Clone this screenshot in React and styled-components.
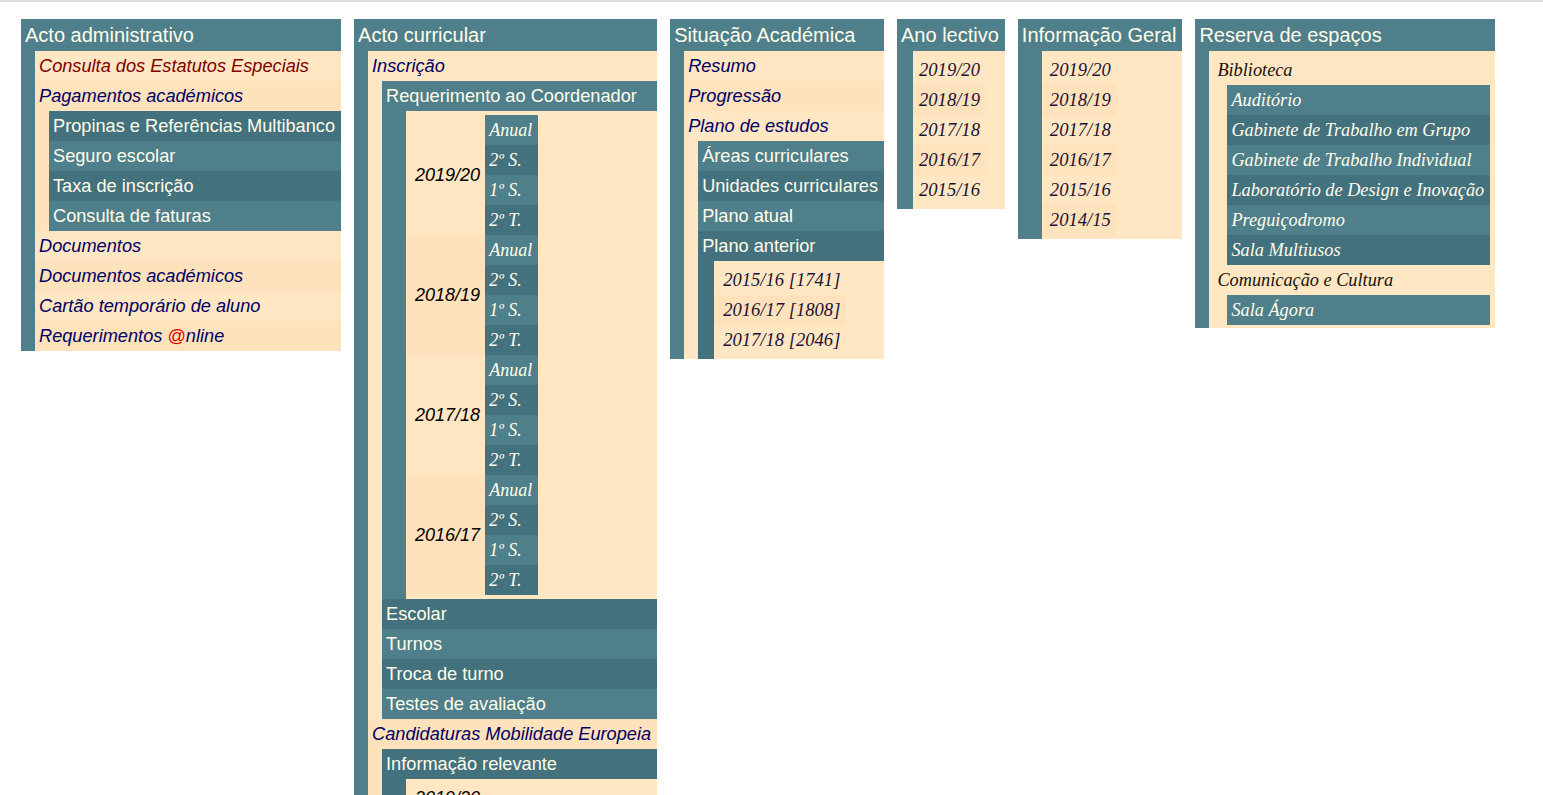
import React from 'react';
import styled, { createGlobalStyle } from 'styled-components';

const C = {
  teal: '#4f7f8b',
  tealDark: '#43717d',
  cream: '#ffe7c4',
  creamDark: '#fde2bb',
  light: '#fffdea',
  navy: '#000066',
  maroon: '#800000',
  ink: '#1b1236',
};

const SANS = '"Liberation Sans", Arial, sans-serif';
const SERIF = '"Liberation Serif", "Times New Roman", serif';

const GlobalStyle = createGlobalStyle`
  html, body { margin: 0; padding: 0; background: #ffffff; }
  body { font-family: ${SANS}; }
  ul { margin: 0; padding: 0; list-style: none; }
`;

const TopRule = styled.div`
  height: 2px;
  background: #dcdcdc;
`;

const Columns = styled.nav`
  display: flex;
  align-items: flex-start;
  gap: 13px;
  padding: 17px 0 0 21px;
`;

const Column = styled.section`
  flex: none;
  background: ${C.teal};
`;

const Title = styled.h2`
  margin: 0;
  height: 32px;
  line-height: 32px;
  padding: 0 6px 0 4px;
  font-size: 20px;
  font-weight: normal;
  color: ${C.light};
  white-space: nowrap;
`;

const List = styled.ul`
  margin-left: ${(p) => p.$indent}px;
  & > li {
    background: ${(p) => (p.$tone === 'teal' ? C.teal : C.cream)};
  }
  & > li:nth-child(${(p) => (p.$flip ? 'odd' : 'even')}) {
    background: ${(p) => (p.$tone === 'teal' ? C.tealDark : C.creamDark)};
  }
`;

const Label = styled.a`
  display: block;
  height: 30px;
  line-height: 30px;
  padding: 0 6px 0 4px;
  white-space: nowrap;
  text-decoration: none;
  font-size: ${(p) => (p.$serif ? '18.3px' : '18.2px')};
  font-family: ${(p) => (p.$serif ? SERIF : SANS)};
  font-style: ${(p) => (p.$serif || p.$tone !== 'teal' ? 'italic' : 'normal')};
  color: ${(p) => (p.$tone === 'teal' ? C.light : p.$maroon ? C.maroon : C.navy)};
`;

const At = styled.span`
  color: #e00000;
  font-style: normal;
`;

const YearList = styled.ul`
  margin-left: ${(p) => p.$indent}px;
  padding: 4px 0;
  background: ${C.cream};
  & > li:nth-child(even) {
    background: ${C.creamDark};
  }
`;

const YearItem = styled.li`
  width: fit-content;
  height: 30px;
  line-height: 30px;
  padding: 0 5px 0 ${(p) => p.$pad}px;
  white-space: nowrap;
  font-family: ${SERIF};
  font-style: italic;
  font-size: 18.6px;
  color: ${C.ink};
`;

const Group = styled.ul`
  margin-left: 14px;
  padding: 4px 5px 3px 0;
  background: ${C.cream};
`;

const GroupLabel = styled.div`
  height: 30px;
  line-height: 30px;
  padding-left: 8px;
  white-space: nowrap;
  font-family: ${SERIF};
  font-style: italic;
  font-size: 18.3px;
  color: #17110c;
`;

const TermBox = styled.div`
  margin-left: 24px;
  padding: 4px 0;
  background: ${C.cream};
`;

const TermTable = styled.table`
  border-collapse: collapse;
  border-spacing: 0;
  & tr:nth-child(even) td.term {
    background: ${C.tealDark};
  }
`;

const YearCell = styled.td`
  padding: 0 5px 0 9px;
  height: 30px;
  vertical-align: middle;
  white-space: nowrap;
  font-family: ${SANS};
  font-style: italic;
  font-size: 18px;
  color: #000000;
  background: ${(p) => (p.$alt ? C.creamDark : C.cream)};
`;

const TermCell = styled.td`
  height: 30px;
  padding: 0 6px 0 4px;
  white-space: nowrap;
  background: ${C.teal};
  font-family: ${SERIF};
  font-style: italic;
  font-size: 18px;
  color: ${C.light};
`;

const TERMS = ['Anual', '2º S.', '1º S.', '2º T.'];

function Terms({ years }) {
  return (
    <TermBox>
      <TermTable>
        <tbody>
          {years.map((y, yi) =>
            TERMS.map((t, ti) => (
              <tr key={y + t}>
                {ti === 0 && (
                  <YearCell rowSpan={4} $alt={yi % 2 === 1}>
                    {y}
                  </YearCell>
                )}
                <TermCell className="term">{t}</TermCell>
              </tr>
            ))
          )}
        </tbody>
      </TermTable>
    </TermBox>
  );
}

function YearsOnly({ years }) {
  return (
    <TermBox>
      <TermTable>
        <tbody>
          {years.map((y, yi) => (
            <tr key={y}>
              <YearCell $alt={yi % 2 === 1}>{y}</YearCell>
            </tr>
          ))}
        </tbody>
      </TermTable>
    </TermBox>
  );
}

function Years({ items, indent, pad }) {
  return (
    <YearList $indent={indent}>
      {items.map((y) => (
        <YearItem key={y} $pad={pad}>
          {y}
        </YearItem>
      ))}
    </YearList>
  );
}

function TealItems({ items, serif }) {
  return items.map((t) => (
    <li key={t}>
      <Label $tone="teal" $serif={serif} href="#">
        {t}
      </Label>
    </li>
  ));
}

export default function App() {
  return (
    <>
      <GlobalStyle />
      <TopRule />
      <Columns>
        <Column>
          <Title>Acto administrativo</Title>
          <List $indent={14} $tone="cream">
            <li>
              <Label $maroon href="#">Consulta dos Estatutos Especiais</Label>
            </li>
            <li>
              <Label href="#">Pagamentos académicos</Label>
              <List $indent={14} $tone="teal" $flip>
                <TealItems
                  items={[
                    'Propinas e Referências Multibanco',
                    'Seguro escolar',
                    'Taxa de inscrição',
                    'Consulta de faturas',
                  ]}
                />
              </List>
            </li>
            <li>
              <Label href="#">Documentos</Label>
            </li>
            <li>
              <Label href="#">Documentos académicos</Label>
            </li>
            <li>
              <Label href="#">Cartão temporário de aluno</Label>
            </li>
            <li>
              <Label href="#">
                Requerimentos <At>@</At>nline
              </Label>
            </li>
          </List>
        </Column>

        <Column>
          <Title>Acto curricular</Title>
          <List $indent={14} $tone="cream">
            <li>
              <Label href="#">Inscrição</Label>
              <List $indent={14} $tone="teal">
                <li>
                  <Label $tone="teal" href="#">Requerimento ao Coordenador</Label>
                  <Terms years={['2019/20', '2018/19', '2017/18', '2016/17']} />
                </li>
                <TealItems items={['Escolar', 'Turnos', 'Troca de turno', 'Testes de avaliação']} />
              </List>
            </li>
            <li>
              <Label href="#">Candidaturas Mobilidade Europeia</Label>
              <List $indent={14} $tone="teal" $flip>
                <li>
                  <Label $tone="teal" href="#">Informação relevante</Label>
                  <YearsOnly years={['2019/20', '2018/19', '2017/18']} />
                </li>
              </List>
            </li>
          </List>
        </Column>

        <Column>
          <Title>Situação Académica</Title>
          <List $indent={14} $tone="cream">
            <li>
              <Label href="#">Resumo</Label>
            </li>
            <li>
              <Label href="#">Progressão</Label>
            </li>
            <li>
              <Label href="#">Plano de estudos</Label>
              <List $indent={14} $tone="teal">
                <TealItems items={['Áreas curriculares', 'Unidades curriculares', 'Plano atual']} />
                <li>
                  <Label $tone="teal" href="#">Plano anterior</Label>
                  <Years indent={16} pad={9} items={['2015/16 [1741]', '2016/17 [1808]', '2017/18 [2046]']} />
                </li>
              </List>
            </li>
          </List>
        </Column>

        <Column>
          <Title>Ano lectivo</Title>
          <Years indent={16} pad={6} items={['2019/20', '2018/19', '2017/18', '2016/17', '2015/16']} />
        </Column>

        <Column>
          <Title>Informação Geral</Title>
          <Years indent={24} pad={8} items={['2019/20', '2018/19', '2017/18', '2016/17', '2015/16', '2014/15']} />
        </Column>

        <Column>
          <Title>Reserva de espaços</Title>
          <Group>
            <li>
              <GroupLabel>Biblioteca</GroupLabel>
              <List $indent={18} $tone="teal">
                <TealItems
                  serif
                  items={[
                    'Auditório',
                    'Gabinete de Trabalho em Grupo',
                    'Gabinete de Trabalho Individual',
                    'Laboratório de Design e Inovação',
                    'Preguiçodromo',
                    'Sala Multiusos',
                  ]}
                />
              </List>
            </li>
            <li>
              <GroupLabel>Comunicação e Cultura</GroupLabel>
              <List $indent={18} $tone="teal">
                <TealItems serif items={['Sala Ágora']} />
              </List>
            </li>
          </Group>
        </Column>
      </Columns>
    </>
  );
}
